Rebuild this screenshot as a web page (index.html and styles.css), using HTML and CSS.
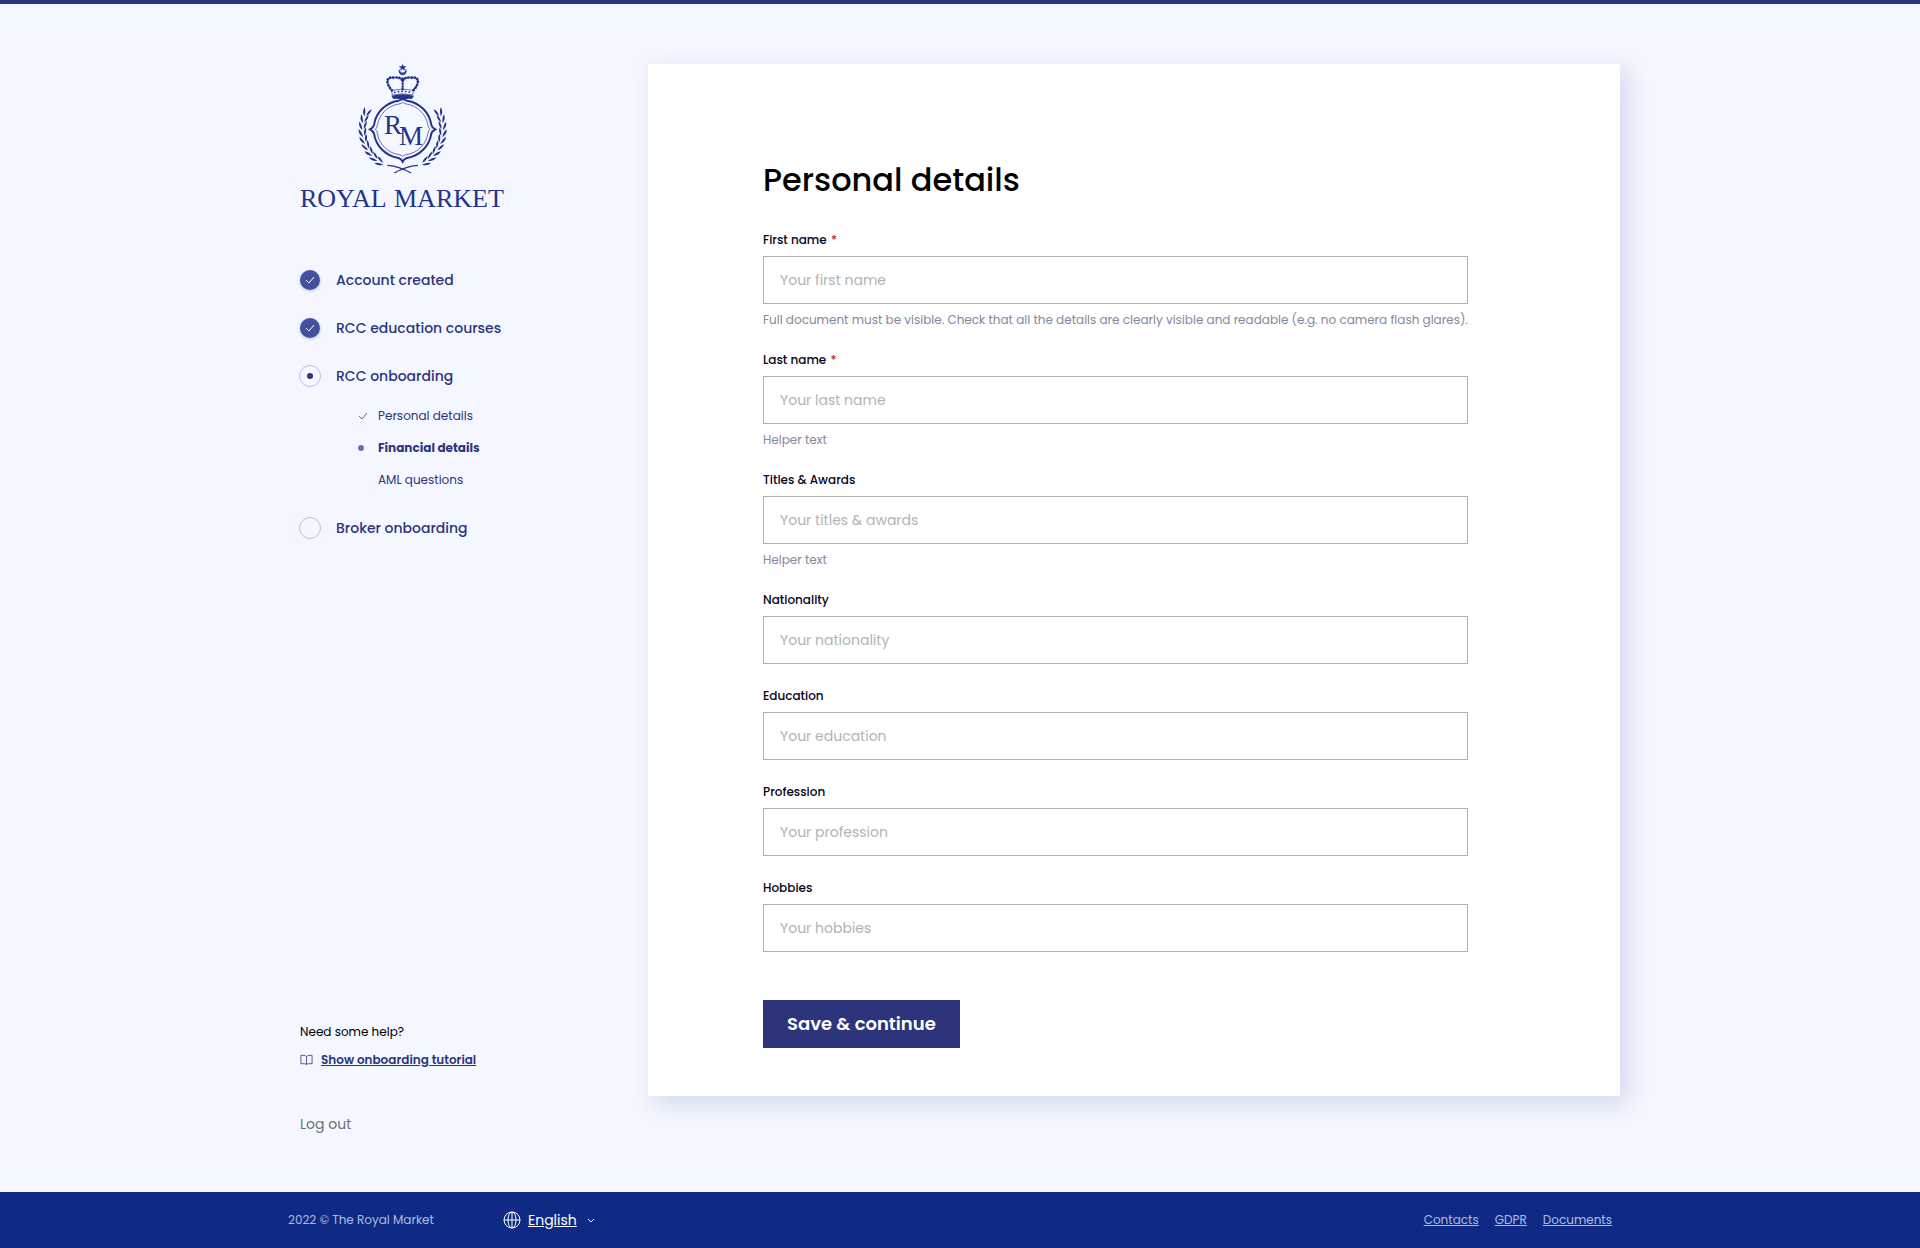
FILE: index.html
```html
<!DOCTYPE html>
<html lang="en">
<head>
<meta charset="utf-8">
<meta name="viewport" content="width=device-width, initial-scale=1">
<title>Personal details – Royal Market</title>
<link rel="stylesheet" href="styles.css">
</head>
<body>
<main class="page">
  <aside class="sidebar">
    <svg class="logo" viewBox="0 0 208 144" role="img" aria-label="Royal Market">
      <defs>
        <path id="leaf" d="M37 226Q24 214 28 200Q36 208 37 226ZM41 222Q41 206 50 198Q52 212 41 222Z"/>
        <g id="branch">
          <use href="#leaf" transform="rotate(20 158 223)"/>
          <use href="#leaf" transform="rotate(10 158 223)"/>
          <use href="#leaf" transform="rotate(0 158 223)"/>
          <use href="#leaf" transform="rotate(-10 158 223)"/>
          <use href="#leaf" transform="rotate(-20 158 223)"/>
          <use href="#leaf" transform="rotate(-30 158 223)"/>
          <use href="#leaf" transform="rotate(-40 158 223)"/>
          <use href="#leaf" transform="rotate(-50 158 223)"/>
          <use href="#leaf" transform="rotate(-60 158 223)"/>
          <path d="M112 331Q150 334 183 354" fill="none" stroke="#24338a" stroke-width="4"/>
        </g>
      </defs>
      <g transform="translate(50 -9) scale(.3333)" fill="#24338a">
        <path d="M158 26l3 8h9l-7 5 3 8-8-5-8 5 3-8-7-5h9z"/>
        <path d="M148 44a11 11 0 1 0 20 0a9 9 0 1 1-20 0z" stroke="#24338a" stroke-width="2"/>
        <g fill="none" stroke="#24338a" stroke-linecap="round">
          <path d="M126 106C104 82 110 64 132 68C146 66 156 70 158 78C160 70 170 66 184 68C206 64 212 82 190 106" stroke-width="8" stroke-dasharray="1 8"/>
          <path d="M126 106C104 82 110 64 132 68C146 66 156 70 158 78C160 70 170 66 184 68C206 64 212 82 190 106" stroke-width="2"/>
          <path d="M158 70V104" stroke-width="7" stroke-dasharray="1 7"/>
          <path d="M126 106Q158 98 190 106L188 120Q158 112 128 120Z" stroke-width="2"/>
          <path d="M134 112Q158 106 182 112" stroke-width="5" stroke-dasharray="1 10"/>
        </g>
        <path d="M124 122Q158 113 192 122L186 132Q170 129 158 136Q146 129 130 132Z"/>
        <path d="M60 223Q70 218 72 210A87 87 0 0 1 145 137Q153 136 158 131Q163 136 171 137A87 87 0 0 1 244 210Q246 218 256 223Q246 228 244 236A87 87 0 0 1 171 309Q162 311 158 320Q154 311 145 309A87 87 0 0 1 72 236Q70 228 60 223Z" fill="none" stroke="#24338a" stroke-width="6"/>
        <path d="M76 223Q81 219 82 212A77 77 0 0 1 147 147Q154 146 158 142Q162 146 169 147A77 77 0 0 1 234 212Q235 219 240 223Q235 227 234 234A77 77 0 0 1 169 299Q162 300 158 304Q154 300 147 299A77 77 0 0 1 82 234Q81 227 76 223Z" fill="none" stroke="#24338a" stroke-width="2"/>
        <use href="#branch"/>
        <use href="#branch" transform="translate(316 0) scale(-1 1)"/>
      </g>
      <text class="logo-letter" x="84" y="70">R</text>
      <text class="logo-letter" x="99" y="81">M</text>
      <text class="logo-name" x="0" y="143">ROYAL <tspan x="94">MARKET</tspan></text>
    </svg>

    <ol class="steps">
      <li class="step">
        <span class="badge badge-done"><svg viewBox="0 0 20 20"><path d="M6 10l3 3 5-6"/></svg></span>
        <span>Account created</span>
      </li>
      <li class="step">
        <span class="badge badge-done"><svg viewBox="0 0 20 20"><path d="M6 10l3 3 5-6"/></svg></span>
        <span>RCC education courses</span>
      </li>
      <li>
        <div class="step">
          <span class="badge badge-open"><i class="dot"></i></span>
          <span>RCC onboarding</span>
        </div>
        <ol class="substeps">
          <li class="substep"><span class="mark"><svg viewBox="0 0 10 8"><path d="M1 4l3 3 5-6"/></svg></span>Personal details</li>
          <li class="substep current"><span class="mark"><i class="dot"></i></span>Financial details</li>
          <li class="substep"><span class="mark"></span>AML questions</li>
        </ol>
      </li>
      <li class="step">
        <span class="badge badge-open"></span>
        <span>Broker onboarding</span>
      </li>
    </ol>

    <div class="help">
      <p class="help-title">Need some help?</p>
      <a class="tutorial" href="#tutorial">
        <svg viewBox="0 0 14 12"><path d="M7 2.500Q6 1 4.500 1H1v9h4q1.500 0 2 1 .5-1 2-1h4V1H9.500Q8 1 7 2.500zV11"/></svg>
        <span>Show onboarding tutorial</span>
      </a>
      <a class="logout" href="#logout">Log out</a>
    </div>
  </aside>

  <section class="card">
    <form class="form">
      <h1 class="title">Personal details</h1>
      <div class="field">
        <label for="first">First name <span class="required">*</span></label>
        <input id="first" type="text" placeholder="Your first name" aria-describedby="first-help">
        <p class="helper" id="first-help">Full document must be visible. Check that all the details are clearly visible and readable (e.g. no camera flash glares).</p>
      </div>
      <div class="field">
        <label for="last">Last name <span class="required">*</span></label>
        <input id="last" type="text" placeholder="Your last name" aria-describedby="last-help">
        <p class="helper" id="last-help">Helper text</p>
      </div>
      <div class="field">
        <label for="titles">Titles &amp; Awards</label>
        <input id="titles" type="text" placeholder="Your titles &amp; awards" aria-describedby="titles-help">
        <p class="helper" id="titles-help">Helper text</p>
      </div>
      <div class="field">
        <label for="nationality">Nationality</label>
        <input id="nationality" type="text" placeholder="Your nationality">
      </div>
      <div class="field">
        <label for="education">Education</label>
        <input id="education" type="text" placeholder="Your education">
      </div>
      <div class="field">
        <label for="profession">Profession</label>
        <input id="profession" type="text" placeholder="Your profession">
      </div>
      <div class="field">
        <label for="hobbies">Hobbies</label>
        <input id="hobbies" type="text" placeholder="Your hobbies">
      </div>
      <button class="save" type="submit">Save &amp; continue</button>
    </form>
  </section>
</main>

<footer class="footer">
  <div class="footer-inner">
    <span class="copyright">2022 © The Royal Market</span>
    <div class="language">
      <svg class="globe" viewBox="0 0 18 18"><circle cx="9" cy="9" r="8"/><ellipse cx="9" cy="9" rx="4" ry="8"/><path d="M9 1v16M1 9h16"/></svg>
      <select class="language-select" aria-label="Language"><option>English</option></select>
      <svg class="chevron" viewBox="0 0 8 5"><path d="M1 1l3 3 3-3"/></svg>
    </div>
    <nav class="footer-links">
      <a href="#contacts">Contacts</a>
      <a href="#gdpr">GDPR</a>
      <a href="#documents">Documents</a>
    </nav>
  </div>
</footer>
</body>
</html>
```
FILE: styles.css
```css
* {
  box-sizing: border-box;
}

body {
  display: flex;
  flex-direction: column;
  min-height: 100vh;
  margin: 0;
  border-top: 4px solid #2d347c;
  background: #f4f7ff;
  color: #000;
  font-family: Poppins, Inter, sans-serif;
  font-size: 14px;
  line-height: 24px;
}

p, h1, ol {
  margin: 0;
  padding: 0;
}

ol {
  list-style: none;
}

.page {
  display: grid;
  grid-template-columns: 348px 1fr;
  flex: 1;
  width: 100%;
  max-width: 1320px;
  margin: 0 auto;
  padding: 60px 0 48px;
}

.sidebar {
  display: flex;
  flex-direction: column;
}

.logo {
  width: 208px;
  height: 144px;
  overflow: visible;
}

.logo text {
  fill: #24338a;
  font-family: "Liberation Serif", serif;
}

.logo-letter {
  font-size: 27px;
}

.logo-name {
  font-size: 26px;
}

.steps {
  display: flex;
  flex-direction: column;
  gap: 24px;
  margin-top: 60px;
  color: #2d347c;
  font-weight: 500;
}

.step {
  display: flex;
  align-items: center;
  gap: 15px;
}

.badge {
  display: flex;
  align-items: center;
  justify-content: center;
  width: 22px;
  height: 22px;
  margin-left: -1px;
  border-radius: 50%;
}

.badge svg {
  width: 20px;
  height: 20px;
  border-radius: 50%;
  background: #444f9f;
  box-shadow: 0 1px 3px rgba(45, 52, 124, 0.3);
  fill: none;
  stroke: #fff;
}

.badge-open {
  border: 1px solid #b6bde6;
}

.dot {
  width: 6px;
  height: 6px;
  border-radius: 50%;
  background: #2d347c;
}

.substeps {
  display: flex;
  flex-direction: column;
  gap: 16px;
  margin: 20px 0 4px 58px;
  font-size: 12px;
  font-weight: 400;
  line-height: 16px;
}

.substep {
  display: flex;
  align-items: center;
}

.substep.current {
  font-weight: 700;
}

.mark {
  display: flex;
  width: 20px;
}

.mark svg {
  width: 10px;
  height: 8px;
  fill: none;
  stroke: #5a66b0;
}

.mark .dot {
  background: #6570b8;
}

.help {
  display: flex;
  flex-direction: column;
  align-items: flex-start;
  margin-top: auto;
  padding-bottom: 8px;
  font-size: 12px;
  line-height: 16px;
}

.tutorial {
  display: flex;
  align-items: center;
  gap: 8px;
  margin: 12px 0 44px;
  color: #2d347c;
  font-weight: 600;
}

.tutorial svg {
  width: 13px;
  height: 12px;
  fill: none;
  stroke: #444f9f;
}

.logout {
  color: #6e6e73;
  font-size: 14px;
  line-height: 24px;
  text-decoration: none;
}

.card {
  align-self: start;
  margin-bottom: 48px;
  padding: 92px 152px 48px 115px;
  background: #fff;
  box-shadow: 7px 7px 22px rgba(45, 52, 124, 0.16);
}

.form {
  display: flex;
  flex-direction: column;
  gap: 24px;
}

.title {
  margin-bottom: 4px;
  font-size: 32px;
  font-weight: 500;
  line-height: 48px;
}

.field {
  display: flex;
  flex-direction: column;
  gap: 8px;
  font-size: 12px;
  line-height: 16px;
}

.field label {
  color: #05051e;
  font-weight: 500;
}

.required {
  margin-left: 1px;
  color: #d32020;
}

.field input {
  width: 100%;
  height: 48px;
  padding: 0 16px;
  border: 1px solid #b0b0b3;
  border-radius: 0;
  background: #fff;
  color: #05051e;
  font: inherit;
  font-size: 14px;
}

.field input::placeholder {
  color: #b3b3b6;
  opacity: 1;
}

.helper {
  color: #8587a0;
  white-space: nowrap;
}

.save {
  align-self: flex-start;
  height: 48px;
  margin-top: 24px;
  padding: 0 24px;
  border: 0;
  background: #2d347c;
  color: #fff;
  font: inherit;
  font-size: 18px;
  font-weight: 600;
}

.footer {
  background: #0f2a84;
  color: #b0bae0;
  font-size: 12px;
}

.footer-inner {
  display: flex;
  align-items: center;
  width: 100%;
  max-width: 1344px;
  height: 56px;
  margin: 0 auto;
  padding-right: 20px;
}

.copyright {
  width: 215px;
}

.language {
  display: flex;
  align-items: center;
  color: #fff;
}

.language svg {
  fill: none;
  stroke: #fff;
}

.globe {
  width: 18px;
  height: 18px;
  margin-right: 7px;
}

.language-select {
  appearance: none;
  padding: 0;
  border: 0;
  background: transparent;
  color: #fff;
  font: inherit;
  font-size: 14px;
  text-decoration: underline;
}

.chevron {
  width: 8px;
  height: 5px;
  margin-left: 10px;
}

.footer-links {
  display: flex;
  gap: 16px;
  margin-left: auto;
}

.footer-links a {
  color: inherit;
}
```
